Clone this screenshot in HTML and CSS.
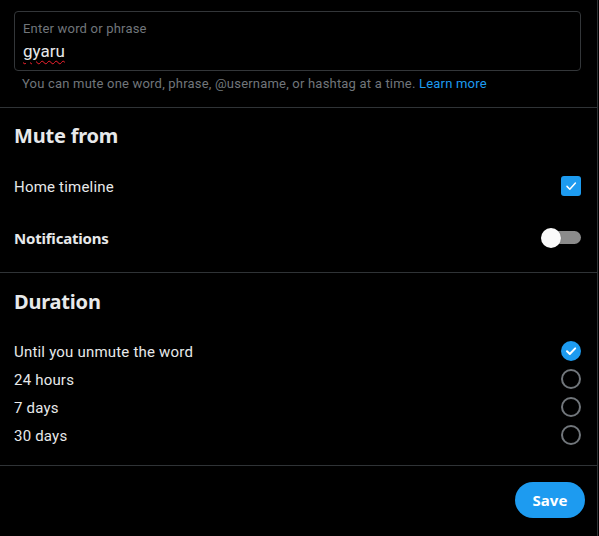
FILE: index.html
```html
<!DOCTYPE html>
<html>
<head>
<meta charset="utf-8">
<link rel="stylesheet" href="styles.css">
</head>
<body>
<div class="panel">
  <div class="field-wrap">
    <div class="field">
      <div class="field-label">Enter word or phrase</div>
      <div class="field-value"><span class="misspelled">gyaru</span></div>
    </div>
    <div class="help">You can mute one word, phrase, @username, or hashtag at a time. <a class="link" href="#">Learn more</a></div>
  </div>

  <section class="section mute">
    <h2 class="heading">Mute from</h2>
    <div class="row">
      <span class="row-label">Home timeline</span>
      <span class="checkbox">
        <svg viewBox="0 0 20 20" width="20" height="20"><path d="M6 10.4l2.8 2.8L14.4 7" fill="none" stroke="#fff" stroke-width="1.5" stroke-linecap="round" stroke-linejoin="round"/></svg>
      </span>
    </div>
    <div class="row">
      <span class="row-label bold">Notifications</span>
      <span class="toggle"><span class="track"></span><span class="knob"></span></span>
    </div>
  </section>

  <section class="section duration">
    <h2 class="heading">Duration</h2>
    <div class="options">
      <div class="option">
        <span class="row-label">Until you unmute the word</span>
        <span class="radio checked">
          <svg viewBox="0 0 20 20" width="20" height="20"><path d="M6 10.3l2.8 2.7L14.2 7.4" fill="none" stroke="#fff" stroke-width="2" stroke-linecap="round" stroke-linejoin="round"/></svg>
        </span>
      </div>
      <div class="option">
        <span class="row-label">24 hours</span>
        <span class="radio"></span>
      </div>
      <div class="option">
        <span class="row-label">7 days</span>
        <span class="radio"></span>
      </div>
      <div class="option">
        <span class="row-label">30 days</span>
        <span class="radio"></span>
      </div>
    </div>
  </section>

  <div class="footer">
    <button class="save">Save</button>
  </div>
</div>
</body>
</html>
```
FILE: styles.css
```css
* { box-sizing: border-box; }
html, body { margin: 0; padding: 0; background: #000; }
body {
  font-family: Roboto, "Noto Sans", "Liberation Sans", sans-serif;
  letter-spacing: 0.2px;
  color: #e7e9ea;
  width: 599px;
  height: 536px;
  overflow: hidden;
}
.panel {
  width: 598px;
  height: 536px;
  border-right: 1px solid #2f3336;
}
.field-wrap {
  padding: 11px 16px 15px 14px;
  border-bottom: 1px solid #2f3336;
}
.field {
  height: 60px;
  border: 1px solid #333639;
  border-radius: 4px;
  padding: 9px 8px 0 8px;
}
.field-label {
  font-size: 13px;
  line-height: 16px;
  color: #71767b;
}
.field-value {
  margin-top: 2px;
  font-size: 17px;
  line-height: 24px;
  color: #e7e9ea;
  letter-spacing: 0;
}
.misspelled {
  text-decoration: underline wavy #f4212e;
  text-decoration-thickness: 1px;
  text-underline-offset: 3px;
}
.help {
  margin-top: 5px;
  padding-left: 8px;
  font-size: 13px;
  line-height: 16px;
  color: #71767b;
}
.link { color: #1d9bf0; text-decoration: none; }

.section {
  padding: 0 16px 8px 14px;
  border-bottom: 1px solid #2f3336;
}
.heading {
  margin: 0;
  padding-top: 16px;
  font-family: "Noto Sans", Roboto, sans-serif;
  letter-spacing: -0.2px;
  font-size: 20px;
  line-height: 24px;
  font-weight: 700;
  color: #e7e9ea;
}
.row {
  height: 52px;
  display: flex;
  align-items: center;
  justify-content: space-between;
}
.mute .heading { margin-bottom: 12px; }
.row-label { font-size: 15px; line-height: 20px; padding-top: 2px; }
.bold {
  font-family: "Noto Sans", Roboto, sans-serif;
  font-weight: 700;
  letter-spacing: -0.2px;
  padding-top: 0;
}
.checkbox {
  width: 20px;
  height: 20px;
  border-radius: 3px;
  background: #1d9bf0;
  display: flex;
}
.toggle {
  position: relative;
  width: 40px;
  height: 20px;
}
.track {
  position: absolute;
  right: 0;
  top: 3px;
  width: 36px;
  height: 13px;
  border-radius: 7px;
  background: #8b8b8b;
}
.knob {
  position: absolute;
  left: 0;
  top: 0;
  width: 20px;
  height: 20px;
  border-radius: 50%;
  background: #fafafa;
  box-shadow: 0 0 1px rgba(0,0,0,0.4);
}
.duration { padding-top: 1px; padding-bottom: 16px; }
.options { margin-top: 23px; }
.option {
  height: 28px;
  display: flex;
  align-items: center;
  justify-content: space-between;
}
.radio {
  width: 20px;
  height: 20px;
  border-radius: 50%;
  border: 2px solid #71767b;
  display: flex;
}
.radio.checked {
  border: none;
  background: #1d9bf0;
}
.footer {
  display: flex;
  justify-content: flex-end;
  padding: 16px 12px 0 0;
}
.save {
  width: 70px;
  height: 36px;
  border: none;
  border-radius: 18px;
  background: #1d9bf0;
  color: #fff;
  font-family: "Noto Sans", Roboto, sans-serif;
  font-size: 15px;
  font-weight: 700;
  padding: 0;
}
```
